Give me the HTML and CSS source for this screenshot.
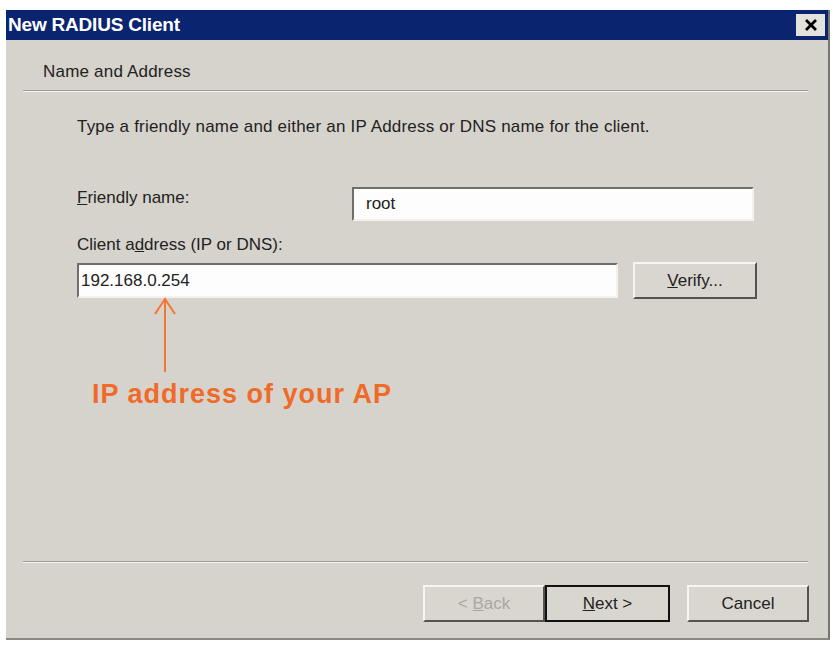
FILE: index.html
```html
<!DOCTYPE html>
<html lang="en">

<head>
  <meta charset="UTF-8">
  <meta name="viewport" content="width=device-width, initial-scale=1.0">
  <title>New RADIUS Client</title>
  <link rel="stylesheet" href="styles.css">
</head>

<body>
  <div class="dialog">
    <div class="titlebar">
      <span class="title">New RADIUS Client</span>
      <button class="close" type="button" aria-label="Close">
        <svg width="14" height="12" viewBox="0 0 14 12">
          <path d="M2 1 L12 11 M12 1 L2 11" stroke="#000" stroke-width="2.8" />
        </svg>
      </button>
    </div>

    <div class="header">Name and Address</div>
    <div class="sep"></div>

    <div class="content">
      <p class="intro">Type a friendly name and either an IP Address or DNS name for the client.</p>

      <div class="row-name">
        <label for="name"><u>F</u>riendly name:</label>
        <input type="text" id="name" class="field field-name" value="root">
      </div>

      <label class="addr-label" for="addr">Client a<u>d</u>dress (IP or DNS):</label>
      <div class="row-addr">
        <input type="text" id="addr" class="field field-addr" value="192.168.0.254">
        <button type="button" class="btn verify"><u>V</u>erify...</button>
      </div>

      <div class="note">
        <svg class="arrow" width="24" height="76" viewBox="0 0 24 76">
          <path d="M12 2 L12 75 M2 17 L12 2 L22 17" fill="none" stroke="#f27632" stroke-width="2" />
        </svg>
        <div class="note-text">IP address of your AP</div>
      </div>
    </div>

    <div class="sep sep-bottom"></div>

    <div class="actions">
      <button type="button" class="btn back" disabled>&lt; <u>B</u>ack</button>
      <button type="button" class="btn next"><u>N</u>ext &gt;</button>
      <button type="button" class="btn cancel">Cancel</button>
    </div>
  </div>
</body>

</html>
```

FILE: styles.css
```css
body {
  margin: 0;
  background: #fff;
  font-family: "Liberation Sans", Arial, sans-serif;
}

.dialog {
  box-sizing: border-box;
  width: 824px;
  height: 630px;
  margin: 10px 0 0 6px;
  background: #d6d3cd;
  border-right: 2px solid #77756f;
  border-bottom: 2px solid #8a8882;
  display: flex;
  flex-direction: column;
}

.titlebar {
  height: 30px;
  background: #0b2470;
  display: flex;
  align-items: center;
  justify-content: space-between;
  padding: 0 3px 0 2px;
}

.title {
  color: #fff;
  font-weight: bold;
  font-size: 19px;
  letter-spacing: -0.2px;
}

.close {
  width: 29px;
  height: 22px;
  padding: 0;
  border: none;
  background: #e4e2dc;
  display: flex;
  align-items: center;
  justify-content: center;
}

.header {
  height: 50px;
  padding: 22px 0 0 37px;
  box-sizing: border-box;
  font-size: 17px;
  line-height: 20px;
  letter-spacing: 0.2px;
  color: #222;
}

.sep {
  height: 1px;
  margin: 0 20px 0 17px;
  background: #9d9b96;
  border-bottom: 1px solid #f4f3f0;
}

.content {
  flex: 1;
  padding: 0 0 0 71px;
  color: #222;
  font-size: 17px;
  line-height: 20px;
}

.intro {
  margin: 25px 0 0;
  letter-spacing: 0.2px;
}

.row-name {
  display: flex;
  margin-top: 50px;
}

.row-name label {
  width: 275px;
  padding-top: 1px;
}

.field {
  box-sizing: border-box;
  height: 34px;
  font: 17px "Liberation Sans", Arial, sans-serif;
  color: #222;
  background: #fdfdfd;
  border: 2px solid;
  border-color: #6f6e6a #f2f1ee #f2f1ee #6f6e6a;
  padding: 0 12px;
}

.field-name {
  width: 402px;
}

.addr-label {
  display: block;
  margin-top: 14px;
}

.row-addr {
  display: flex;
  align-items: center;
  gap: 15px;
  margin-top: 7px;
}

.field-addr {
  width: 541px;
  height: 35px;
  padding-left: 2px;
}

.btn {
  box-sizing: border-box;
  height: 37px;
  font: 17px "Liberation Sans", Arial, sans-serif;
  color: #222;
  background: #d9d6d0;
  border: 2px solid;
  border-color: #f6f5f2 #55534f #55534f #f6f5f2;
  padding: 0;
}

.verify {
  width: 124px;
}

.note {
  margin-left: 76px;
}

.arrow {
  display: block;
  margin-top: -2px;
}

.note-text {
  margin: 6px 0 0 -61px;
  color: #f06a28;
  font-weight: bold;
  font-size: 27px;
  line-height: 30px;
  letter-spacing: 1px;
}

.sep-bottom {
  margin-bottom: 22px;
}

.actions {
  display: flex;
  padding: 0 19px 16px 417px;
}

.back {
  width: 122px;
  color: #a9a7a2;
}

.next {
  width: 125px;
  border: 2px solid #111;
}

.cancel {
  width: 122px;
  margin-left: 17px;
}
```
